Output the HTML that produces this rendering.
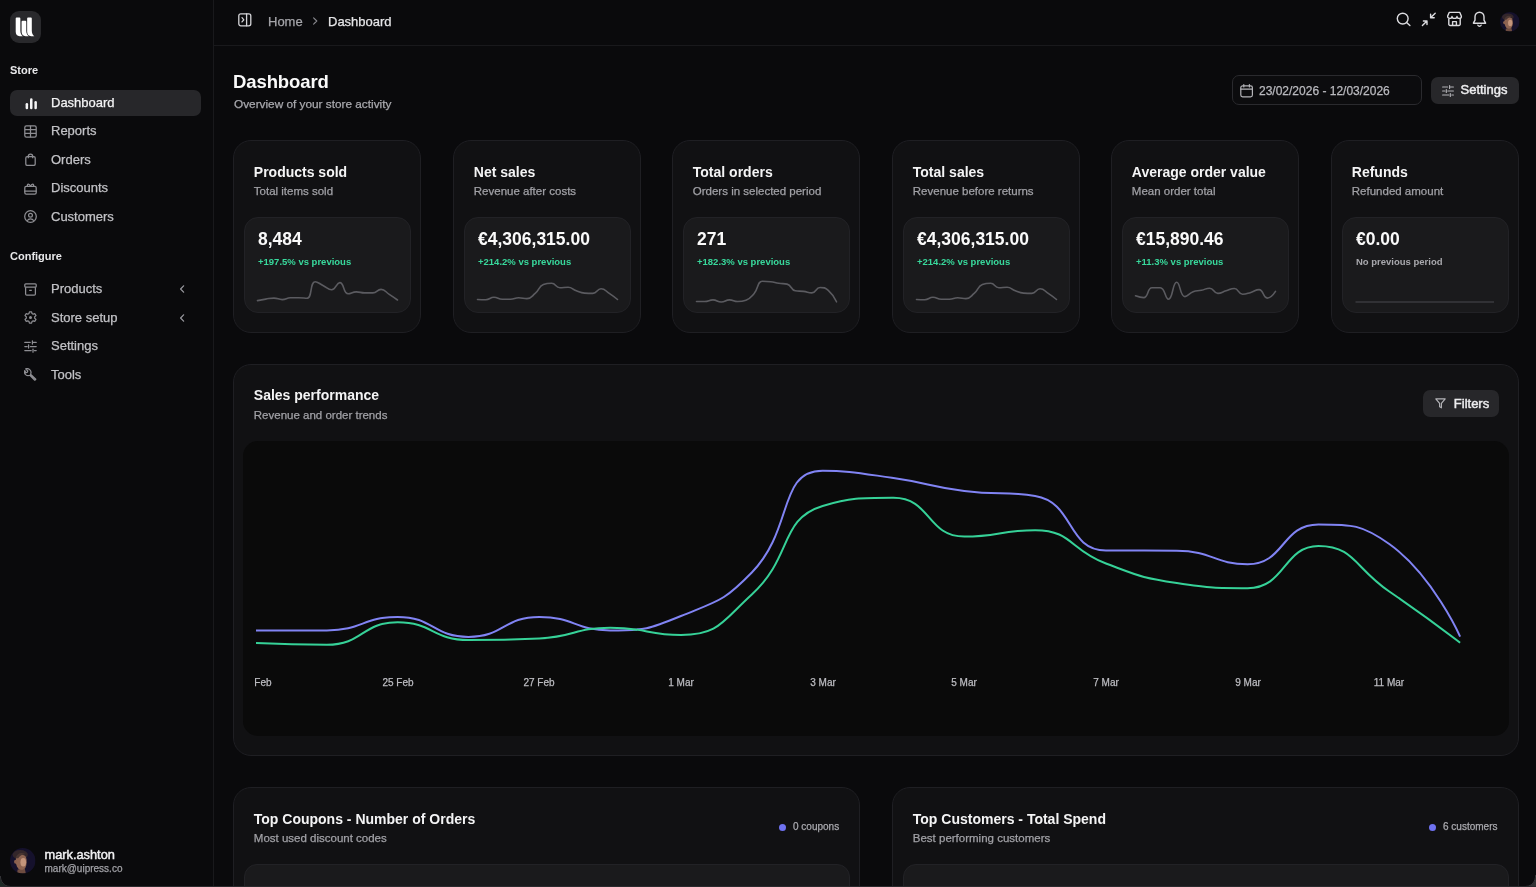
<!DOCTYPE html>
<html><head><meta charset="utf-8">
<style>
*{box-sizing:border-box;margin:0;padding:0}
html,body{width:1536px;height:887px;overflow:hidden;background:#0a0a0c;font-family:"Liberation Sans",sans-serif;color:#f4f4f5}
body>*{will-change:transform}
.item .tx,.crumb,.sub,.date .tx,.btn .tx,.st-s,.c-s,.xl,.badge,.rg{-webkit-text-stroke:0.25px currentColor}
.btn .tx,.med{-webkit-text-stroke:0.45px currentColor}
.abs{position:absolute}
#side{position:absolute;left:0;top:0;width:214px;height:887px;background:#0a0a0c;border-right:1px solid #19191c}
.logo{position:absolute;left:10.2px;top:11.4px;width:31px;height:31.5px;border-radius:9px;background:#29292c}
.sec{position:absolute;left:10px;font-size:11px;font-weight:bold;line-height:16px;color:#e8e8ea}
.item{position:absolute;left:10px;width:191px;height:26px;border-radius:7px}
.item.active{background:#27272a}
.item .ic{position:absolute;left:14px;top:6.5px;width:13px;height:13px}
.item .tx{position:absolute;left:41px;top:4px;font-size:13px;line-height:18px;color:#c2c2c6;white-space:nowrap}
.item.active .tx{color:#f4f4f5}
.item .chev{position:absolute;left:169px;top:9px}
#hdr{position:absolute;left:214px;top:0;width:1322px;height:46px;border-bottom:1px solid #19191c}
.crumb{position:absolute;top:12.9px;font-size:13px;line-height:18px;white-space:nowrap}
.hic{position:absolute;top:11px}
.ttl{position:absolute;left:233px;top:69.7px;font-size:18.5px;font-weight:bold;line-height:24px;color:#fafafa;letter-spacing:-0.1px}
.sub{position:absolute;left:233.5px;top:96.1px;font-size:11.8px;line-height:16px;color:#a9a9ae}
.date{position:absolute;left:1232px;top:75px;width:190px;height:30px;border:1px solid #2a2a2e;border-radius:7px;background:#0c0c0e}
.date .tx{position:absolute;left:26px;top:6.5px;font-size:12px;line-height:16px;color:#bababf;white-space:nowrap}
.btn{position:absolute;background:#27272a;border-radius:7px}
.btn .tx{position:absolute;font-size:13px;line-height:18px;color:#ededef;white-space:nowrap}
.stat{position:absolute;top:140px;width:188px;height:193px;border:1px solid #1f1f23;border-radius:18px;background:#111113}
.st-t{position:absolute;left:19.8px;top:20.5px;font-size:14px;font-weight:bold;line-height:20px;color:#f4f4f5;white-space:nowrap}
.st-s{position:absolute;left:19.8px;top:41.5px;font-size:11.5px;line-height:16px;color:#a1a1a6;white-space:nowrap}
.st-box{position:absolute;left:10px;top:76px;width:167px;height:96px;border:1px solid #222226;border-radius:14px;background:#1a1a1c}
.st-v{position:absolute;left:13px;top:8.5px;font-size:17.5px;font-weight:bold;line-height:24px;color:#fafafa;white-space:nowrap}
.chg{position:absolute;left:13px;top:37.4px;font-size:9.5px;font-weight:bold;line-height:14px;color:#38d99c;white-space:nowrap}
.chg.nop{color:#a8a8ad}
.spark{position:absolute;left:10.7px;top:51.9px}
.card{position:absolute;border:1px solid #1f1f23;border-radius:18px;background:#111113}
.c-t{position:absolute;left:19.8px;font-size:14px;font-weight:bold;line-height:20px;color:#f4f4f5;white-space:nowrap}
.c-s{position:absolute;left:19.8px;font-size:11.5px;line-height:16px;color:#a1a1a6;white-space:nowrap}
.chart{position:absolute;background:#0a0a0a;border-radius:15px;overflow:hidden}
.xl{position:absolute;top:677px;font-size:10px;line-height:12px;color:#bdbdc2;white-space:nowrap;transform:translateX(-50%)}
.badge{position:absolute;font-size:10px;line-height:14px;color:#a9a9ae;white-space:nowrap}
.badge i{position:absolute;left:-14px;top:4px;width:7px;height:7px;border-radius:50%;background:#6f72f0}
.inner{position:absolute;background:#1a1a1c;border:1px solid #222226;border-radius:13px}
</style></head>
<body>
<!-- SIDEBAR -->
<div id="side">
  <div class="logo">
    <svg width="31" height="31" viewBox="0 0 31 31" style="position:absolute;left:0;top:0">
      <g fill="#ffffff">
        <path d="M5.70,7.40Q5.70,6.50 6.60,6.50H9.45Q10.35,6.50 10.35,7.40V19.8C10.35,22.4 11.35,24.2 12.85,25.2H9.70C7.20,25.2 5.70,23.6 5.70,20.8Z"/><path d="M11.60,10.70Q11.60,9.80 12.50,9.80H15.35Q16.25,9.80 16.25,10.70V19.8C16.25,22.4 17.25,24.2 18.75,25.2H15.60C13.10,25.2 11.60,23.6 11.60,20.8Z"/><path d="M17.15,7.40Q17.15,6.50 18.05,6.50H20.90Q21.80,6.50 21.80,7.40V19.8C21.80,22.4 22.80,24.2 24.30,25.2H21.15C18.65,25.2 17.15,23.6 17.15,20.8Z"/>
      </g>
    </svg>
  </div>
  <div class="sec" style="top:61.6px">Store</div>
  <div class="item active" style="top:90px">
    <svg class="ic" viewBox="0 0 13 13" style="left:14.5px"><g fill="#f4f4f5"><rect x="0.6" y="6" width="2.5" height="6.3" rx="1.25"/><rect x="5" y="1.2" width="2.5" height="11.1" rx="1.25"/><rect x="9.4" y="4" width="2.5" height="8.3" rx="1.25"/></g></svg>
    <div class="tx">Dashboard</div>
  </div>
  <div class="item" style="top:118.4px">
    <svg class="ic" viewBox="0 0 13 13"><g fill="none" stroke="#8e8e93" stroke-width="1.25"><rect x="0.8" y="0.8" width="11.4" height="11.4" rx="1.6"/><path d="M0.8,4.6H12.2M0.8,8.4H12.2M6.5,0.8V12.2"/></g></svg>
    <div class="tx">Reports</div>
  </div>
  <div class="item" style="top:146.8px">
    <svg class="ic" viewBox="0 0 13 13"><g fill="none" stroke="#8e8e93" stroke-width="1.25" stroke-linejoin="round"><rect x="1.8" y="3.6" width="9.4" height="8.8" rx="1.4"/><path d="M4.3,5.2V3.2a2.2,2.2 0 0 1 4.4,0V5.2"/></g></svg>
    <div class="tx">Orders</div>
  </div>
  <div class="item" style="top:175.2px">
    <svg class="ic" viewBox="0 0 13 13"><g fill="none" stroke="#8e8e93" stroke-width="1.25" stroke-linejoin="round" stroke-linecap="round"><rect x="0.8" y="4.4" width="11.4" height="7.8" rx="1.4"/><path d="M0.8,9.2H12.2M6.5,4.4C5.4,1.4 3,1.2 3.4,4.4M6.5,4.4C7.6,1.4 10,1.2 9.6,4.4"/></g></svg>
    <div class="tx">Discounts</div>
  </div>
  <div class="item" style="top:203.6px">
    <svg class="ic" viewBox="0 0 13 13"><g fill="none" stroke="#8e8e93" stroke-width="1.25"><circle cx="6.5" cy="6.5" r="5.8"/><circle cx="6.5" cy="5.2" r="1.9"/><path d="M3.2,10.8c0.8-1.4 1.9-2 3.3-2s2.5,0.6 3.3,2"/></g></svg>
    <div class="tx">Customers</div>
  </div>

  <div class="sec" style="top:247.8px">Configure</div>
  <div class="item" style="top:276.4px">
    <svg class="ic" viewBox="0 0 13 13"><g fill="none" stroke="#8e8e93" stroke-width="1.25" stroke-linejoin="round"><rect x="0.8" y="0.8" width="11.4" height="3.4" rx="1"/><path d="M1.6,4.2V11a1.2,1.2 0 0 0 1.2,1.2h7.4a1.2,1.2 0 0 0 1.2-1.2V4.2M5.2,7.3h2.6"/></g></svg>
    <div class="tx">Products</div>
    <svg class="chev" width="7" height="8" viewBox="0 0 7 8"><path d="M4.6,0.8L1.6,4L4.6,7.2" fill="none" stroke="#9a9aa0" stroke-width="1.2" stroke-linecap="round" stroke-linejoin="round"/></svg>
  </div>
  <div class="item" style="top:304.8px">
    <svg class="ic" viewBox="0 0 13 13"><g fill="none" stroke="#8e8e93" stroke-width="1.2" stroke-linejoin="round"><path d="M5.4,0.8h2.2l0.4,1.7l1.2,0.7l1.7-0.5l1.1,1.9l-1.3,1.2v1.4l1.3,1.2l-1.1,1.9l-1.7-0.5l-1.2,0.7l-0.4,1.7H5.4L5,10.5L3.8,9.8L2.1,10.3L1,8.4l1.3-1.2V5.8L1,4.6l1.1-1.9l1.7,0.5L5,2.5Z"/></g><circle cx="6.5" cy="6.5" r="1.5" fill="#8e8e93"/></svg>
    <div class="tx">Store setup</div>
    <svg class="chev" width="7" height="8" viewBox="0 0 7 8"><path d="M4.6,0.8L1.6,4L4.6,7.2" fill="none" stroke="#9a9aa0" stroke-width="1.2" stroke-linecap="round" stroke-linejoin="round"/></svg>
  </div>
  <div class="item" style="top:333.2px">
    <svg class="ic" viewBox="0 0 13 13"><g fill="none" stroke="#8e8e93" stroke-width="1.25" stroke-linecap="round"><path d="M0.8,2.4H6.2M9.4,2.4H12.2M8.4,0.8V4M0.8,6.5H3.2M6.4,6.5H12.2M4.6,4.9V8.1M0.8,10.6H7.2M10.4,10.6H12.2M9,9V12.2"/></g></svg>
    <div class="tx">Settings</div>
  </div>
  <div class="item" style="top:361.6px">
    <svg class="ic" viewBox="0 0 13 13"><g fill="none" stroke="#8e8e93" stroke-width="1.25" stroke-linejoin="round"><path d="M11.8,11.2L6.6,6.2C7.3,4.6 7,2.8 5.7,1.6C4.6,0.6 3,0.3 1.7,0.9L3.8,3L3.2,4.3L1.8,4.7L0.8,2.6C0.2,4 0.6,5.6 1.6,6.6C2.7,7.6 4.4,7.9 5.8,7.3L10.8,12.2Z"/></g></svg>
    <div class="tx">Tools</div>
  </div>

  <div class="abs" style="left:10px;top:848px;width:25.5px;height:25.5px"><svg viewBox="0 0 100 100" width="100%" height="100%" style="position:absolute;left:0;top:0;display:block"><defs><clipPath id="av1"><circle cx="50" cy="50" r="50"/></clipPath></defs><g clip-path="url(#av1)"><rect width="100" height="100" fill="#15112c"/><ellipse cx="40" cy="26" rx="30" ry="18" fill="#33262a"/><path d="M30,84 L58,80 L62,100 L28,100Z" fill="#6e4c40"/><path d="M24,40 C30,24 52,22 62,34 C68,48 66,66 60,78 C54,86 40,88 32,80 C24,70 20,54 24,40Z" fill="#8e6452"/><ellipse cx="52" cy="56" rx="11" ry="17" fill="#c4957c"/><ellipse cx="22" cy="54" rx="6" ry="8" fill="#8a604f"/><path d="M22,40 C26,22 44,14 60,24 C52,26 40,28 32,40Z" fill="#4a3632"/></g></svg></div>
  <div class="abs med" style="left:44.5px;top:846px;font-size:12.8px;line-height:17px;color:#f0f0f2;white-space:nowrap">mark.ashton</div>
  <div class="abs rg" style="left:44.5px;top:862px;font-size:10px;line-height:14px;color:#a1a1a6;white-space:nowrap">mark@uipress.co</div>
</div>

<!-- HEADER -->
<div id="hdr"></div>
<svg class="abs" style="left:237.6px;top:12.6px" width="14" height="14" viewBox="0 0 14 14"><g fill="none" stroke="#d4d4d8" stroke-width="1.3" stroke-linecap="round" stroke-linejoin="round"><rect x="0.8" y="0.8" width="12" height="12" rx="2"/><path d="M8.6,0.8V12.8M4,4.7L5.8,6.8L4,8.9"/></g></svg>
<div class="crumb" style="left:268.3px;color:#a5a5aa">Home</div>
<svg class="abs" style="left:311.5px;top:17px" width="7" height="8" viewBox="0 0 7 8"><path d="M1.6,0.8L4.8,4L1.6,7.2" fill="none" stroke="#8a8a90" stroke-width="1.1" stroke-linecap="round" stroke-linejoin="round"/></svg>
<div class="crumb" style="left:327.8px;color:#e6e6e8">Dashboard</div>

<!-- header right icons -->
<svg class="abs" style="left:1396px;top:12px" width="16" height="15" viewBox="0 0 16 15"><g fill="none" stroke="#dcdce0" stroke-width="1.4" stroke-linecap="round"><circle cx="6.7" cy="6.6" r="5.4"/><path d="M10.6,10.5L13.9,13.6"/></g></svg>
<svg class="abs" style="left:1421px;top:12px" width="16" height="15" viewBox="0 0 16 15"><g fill="none" stroke="#dcdce0" stroke-width="1.4" stroke-linecap="round" stroke-linejoin="round"><path d="M14.2,1.2L9.6,5.8M9.6,2.2V5.8H13.2M1.4,13.6L6,9M2.4,9H6V12.6"/></g></svg>
<svg class="abs" style="left:1446.5px;top:11px" width="16" height="16" viewBox="0 0 16 16"><g fill="none" stroke="#dcdce0" stroke-width="1.4" stroke-linejoin="round"><path d="M2.2,1.4H12.8L14.4,5.2C14.4,6.6 13.4,7.4 12.3,7.4C11.1,7.4 10,6.6 10,5.4C10,6.6 9,7.4 7.5,7.4C6,7.4 5,6.6 5,5.4C5,6.6 3.9,7.4 2.7,7.4C1.6,7.4 0.6,6.6 0.6,5.2Z"/><path d="M1.8,7.4V13.2A1.3,1.3 0 0 0 3.1,14.5H11.9A1.3,1.3 0 0 0 13.2,13.2V7.4M5.6,14.5V10.6H9.4V14.5"/></g></svg>
<svg class="abs" style="left:1471.5px;top:11px" width="16" height="17" viewBox="0 0 16 17"><g fill="none" stroke="#dcdce0" stroke-width="1.4" stroke-linecap="round" stroke-linejoin="round"><path d="M7.5,1.2C4.9,1.2 3,3.2 3,5.8V9.2L1.4,12.2H13.6L12,9.2V5.8C12,3.2 10.1,1.2 7.5,1.2Z"/><path d="M5.9,14.2C6.3,15 6.8,15.3 7.5,15.3C8.2,15.3 8.7,15 9.1,14.2"/></g></svg>
<div class="abs" style="left:1499.8px;top:11.9px;width:19.6px;height:19.6px"><svg viewBox="0 0 100 100" width="100%" height="100%" style="position:absolute;left:0;top:0;display:block"><defs><clipPath id="av2"><circle cx="50" cy="50" r="50"/></clipPath></defs><g clip-path="url(#av2)"><rect width="100" height="100" fill="#15112c"/><ellipse cx="40" cy="26" rx="30" ry="18" fill="#33262a"/><path d="M30,84 L58,80 L62,100 L28,100Z" fill="#6e4c40"/><path d="M24,40 C30,24 52,22 62,34 C68,48 66,66 60,78 C54,86 40,88 32,80 C24,70 20,54 24,40Z" fill="#8e6452"/><ellipse cx="52" cy="56" rx="11" ry="17" fill="#c4957c"/><ellipse cx="22" cy="54" rx="6" ry="8" fill="#8a604f"/><path d="M22,40 C26,22 44,14 60,24 C52,26 40,28 32,40Z" fill="#4a3632"/></g></svg></div>

<!-- PAGE TITLE -->
<div class="ttl">Dashboard</div>
<div class="sub">Overview of your store activity</div>

<div class="date">
  <svg class="abs" style="left:6.5px;top:7.5px" width="14" height="14" viewBox="0 0 14 14"><g fill="none" stroke="#b4b4b8" stroke-width="1.2" stroke-linecap="round"><rect x="0.8" y="1.8" width="11.6" height="11" rx="1.8"/><path d="M0.8,5.2H12.4M3.8,0.6V3M9.4,0.6V3"/></g></svg>
  <div class="tx">23/02/2026 - 12/03/2026</div>
</div>
<div class="btn" style="left:1431.3px;top:76.5px;width:87.5px;height:26.5px">
  <svg class="abs" style="left:10.5px;top:7.5px" width="12" height="12" viewBox="0 0 12 12"><g fill="none" stroke="#b4b4b8" stroke-width="1.15" stroke-linecap="round"><path d="M0.6,2H5.6M8.6,2H11.4M7.6,0.6V3.4M0.6,6H2.8M5.8,6H11.4M4.3,4.6V7.4M0.6,10H6.8M9.8,10H11.4M8.3,8.6V11.4"/></g></svg>
  <div class="tx" style="left:29.5px;top:4.2px">Settings</div>
</div>

<!-- STAT CARDS -->

  <div class="stat" style="left:233px">
    <div class="st-t">Products sold</div>
    <div class="st-s">Total items sold</div>
    <div class="st-box">
      <div class="st-v">8,484</div>
      <div class="chg">+197.5% vs previous</div>
      <svg class="spark" width="145" height="40" viewBox="0 0 145 40"><path d="M1.50,30.60C1.50,30.60 5.60,29.73 9.74,29.10C13.83,28.48 13.87,28.10 17.97,28.10C22.11,28.10 22.10,29.60 26.21,29.60C30.34,29.60 30.28,27.90 34.44,27.80C38.51,27.70 38.56,27.70 42.68,27.70C46.80,27.70 48.37,28.30 50.91,28.30C56.61,28.30 53.64,11.70 59.15,11.70C61.87,11.70 63.26,13.70 67.38,15.70C71.50,17.70 71.85,19.70 75.62,19.70C80.09,19.70 80.23,12.60 83.85,12.60C88.46,12.60 86.97,23.70 92.09,23.70C95.21,23.70 96.17,21.90 100.32,21.90C104.41,21.90 104.43,22.90 108.56,22.90C112.66,22.90 112.85,22.90 116.79,22.90C121.08,22.90 121.06,19.40 125.03,19.40C129.30,19.40 129.22,21.79 133.26,24.40C137.45,27.09 141.50,30.00 141.50,30.00" fill="none" stroke="#5b5b60" stroke-width="1.6" stroke-linecap="round"/></svg>
    </div>
  </div>
  <div class="stat" style="left:453px">
    <div class="st-t">Net sales</div>
    <div class="st-s">Revenue after costs</div>
    <div class="st-box">
      <div class="st-v">€4,306,315.00</div>
      <div class="chg">+214.2% vs previous</div>
      <svg class="spark" width="145" height="40" viewBox="0 0 145 40"><path d="M1.50,29.50C1.50,29.50 5.70,29.70 9.74,29.70C13.94,29.70 13.82,27.30 17.97,27.30C22.06,27.30 22.03,29.20 26.21,29.20C30.27,29.20 30.35,29.20 34.44,29.20C38.59,29.20 38.54,27.80 42.68,27.80C46.77,27.80 47.13,28.60 50.91,28.60C55.36,28.60 55.47,26.53 59.15,23.40C63.70,19.53 62.51,16.48 67.38,14.60C70.75,13.30 71.73,13.30 75.62,13.30C79.97,13.30 79.48,17.70 83.85,17.70C87.72,17.70 88.15,17.20 92.09,17.20C96.38,17.20 96.10,19.29 100.32,20.80C104.34,22.24 104.37,22.79 108.56,23.10C112.60,23.40 112.96,23.40 116.79,23.40C121.19,23.40 120.91,18.75 125.03,18.75C129.15,18.75 129.31,20.82 133.26,23.40C137.55,26.20 141.50,29.50 141.50,29.50" fill="none" stroke="#5b5b60" stroke-width="1.6" stroke-linecap="round"/></svg>
    </div>
  </div>
  <div class="stat" style="left:672px">
    <div class="st-t">Total orders</div>
    <div class="st-s">Orders in selected period</div>
    <div class="st-box">
      <div class="st-v">271</div>
      <div class="chg">+182.3% vs previous</div>
      <svg class="spark" width="145" height="40" viewBox="0 0 145 40"><path d="M1.50,31.50C1.50,31.50 5.66,31.50 9.74,31.50C13.89,31.50 13.88,29.90 17.97,29.90C22.11,29.90 22.09,32.00 26.21,32.00C30.32,32.00 30.30,29.90 34.44,29.90C38.53,29.90 38.55,31.50 42.68,31.50C46.78,31.50 47.30,31.50 50.91,30.20C55.54,28.53 55.68,27.39 59.15,23.40C63.91,17.92 62.11,11.25 67.38,11.25C70.35,11.25 71.54,11.25 75.62,11.70C79.77,12.16 79.71,12.70 83.85,13.30C87.94,13.90 88.48,13.30 92.09,14.10C96.72,15.13 95.69,20.03 100.32,20.80C103.93,21.40 104.47,20.88 108.56,21.40C112.70,21.93 113.01,22.90 116.79,22.90C121.25,22.90 120.66,17.50 125.03,17.50C128.89,17.50 130.13,17.58 133.26,20.30C138.36,24.73 141.50,31.80 141.50,31.80" fill="none" stroke="#5b5b60" stroke-width="1.6" stroke-linecap="round"/></svg>
    </div>
  </div>
  <div class="stat" style="left:892px">
    <div class="st-t">Total sales</div>
    <div class="st-s">Revenue before returns</div>
    <div class="st-box">
      <div class="st-v">€4,306,315.00</div>
      <div class="chg">+214.2% vs previous</div>
      <svg class="spark" width="145" height="40" viewBox="0 0 145 40"><path d="M1.50,29.50C1.50,29.50 5.70,29.70 9.74,29.70C13.94,29.70 13.82,27.30 17.97,27.30C22.06,27.30 22.03,29.20 26.21,29.20C30.27,29.20 30.35,29.20 34.44,29.20C38.59,29.20 38.54,27.80 42.68,27.80C46.77,27.80 47.13,28.60 50.91,28.60C55.36,28.60 55.47,26.53 59.15,23.40C63.70,19.53 62.51,16.48 67.38,14.60C70.75,13.30 71.73,13.30 75.62,13.30C79.97,13.30 79.48,17.70 83.85,17.70C87.72,17.70 88.15,17.20 92.09,17.20C96.38,17.20 96.10,19.29 100.32,20.80C104.34,22.24 104.37,22.79 108.56,23.10C112.60,23.40 112.96,23.40 116.79,23.40C121.19,23.40 120.91,18.75 125.03,18.75C129.15,18.75 129.31,20.82 133.26,23.40C137.55,26.20 141.50,29.50 141.50,29.50" fill="none" stroke="#5b5b60" stroke-width="1.6" stroke-linecap="round"/></svg>
    </div>
  </div>
  <div class="stat" style="left:1111px">
    <div class="st-t">Average order value</div>
    <div class="st-s">Mean order total</div>
    <div class="st-box">
      <div class="st-v">€15,890.46</div>
      <div class="chg">+11.3% vs previous</div>
      <svg class="spark" width="145" height="40" viewBox="0 0 145 40"><path d="M1.50,25.80C1.50,25.80 6.48,27.60 9.74,27.60C14.71,27.60 12.95,17.70 17.97,17.70C21.18,17.70 23.18,17.70 26.21,17.70C31.41,17.70 30.91,29.20 34.44,29.20C39.14,29.20 38.29,12.30 42.68,12.30C46.53,12.30 45.70,26.60 50.91,26.60C53.94,26.60 54.75,23.31 59.15,21.70C62.98,20.30 63.30,21.17 67.38,20.30C71.54,19.42 71.78,18.20 75.62,18.20C80.02,18.20 79.49,23.40 83.85,23.40C87.72,23.40 87.95,22.03 92.09,20.80C96.19,19.58 96.53,18.50 100.32,18.50C104.77,18.50 104.09,24.20 108.56,24.20C112.32,24.20 112.74,23.53 116.79,22.40C120.98,21.23 121.54,19.60 125.03,19.60C129.78,19.60 128.92,28.10 133.26,28.10C137.16,28.10 141.50,21.40 141.50,21.40" fill="none" stroke="#5b5b60" stroke-width="1.6" stroke-linecap="round"/></svg>
    </div>
  </div>
  <div class="stat" style="left:1331px">
    <div class="st-t">Refunds</div>
    <div class="st-s">Refunded amount</div>
    <div class="st-box">
      <div class="st-v">€0.00</div>
      <div class="chg nop">No previous period</div>
      <svg class="spark" width="145" height="40" viewBox="0 0 145 40"><path d="M1.5,32 L140,32" fill="none" stroke="#3a3a3e" stroke-width="1.6"/></svg>
    </div>
  </div>

<!-- SALES PERFORMANCE -->
<div class="card" style="left:233px;top:364px;width:1286px;height:392px">
  <div class="c-t" style="top:20.3px">Sales performance</div>
  <div class="c-s" style="top:41.8px">Revenue and order trends</div>
</div>
<div class="btn" style="left:1422.9px;top:389.5px;width:76.1px;height:27px">
  <svg class="abs" style="left:11.5px;top:8px" width="11" height="11" viewBox="0 0 11 11"><path d="M0.8,0.9H10.2L6.4,5.4V9.8L4.6,8.8V5.4Z" fill="none" stroke="#b4b4b8" stroke-width="1.15" stroke-linejoin="round"/></svg>
  <div class="tx" style="left:30.8px;top:4.5px">Filters</div>
</div>
<div class="chart" style="left:243px;top:441px;width:1266px;height:295px"></div>
<svg class="abs" style="left:0;top:0;overflow:visible" width="1536" height="887">
  <defs><clipPath id="cp"><rect x="256" y="441" width="1253" height="295"/></clipPath></defs>
  <path d="M256.00,630.40C256.00,630.40 291.73,630.40 326.83,630.40C362.56,630.40 362.61,616.90 397.66,616.90C433.44,616.90 433.07,636.90 468.49,636.90C503.90,636.90 503.54,616.90 539.32,616.90C574.37,616.90 574.78,630.40 610.15,630.40C645.61,630.40 648.04,629.47 680.98,616.00C718.87,600.52 723.39,601.65 751.81,572.50C794.22,529.00 777.64,470.70 822.64,470.70C848.47,470.70 858.25,472.95 893.47,478.00C929.08,483.10 928.64,486.47 964.30,491.00C999.47,495.47 1003.77,491.00 1035.13,496.00C1074.60,502.29 1066.45,550.25 1105.96,550.50C1137.28,550.70 1141.69,550.50 1176.79,550.70C1212.52,550.90 1214.32,564.20 1247.62,564.20C1285.15,564.20 1281.26,524.40 1318.45,524.40C1352.09,524.40 1361.89,524.40 1389.28,544.00C1432.72,575.09 1460.11,636.60 1460.11,636.60" fill="none" stroke="#8184f4" stroke-width="2" stroke-linejoin="round" stroke-linecap="butt"/>
  <path d="M256.00,643.10C256.00,643.10 292.27,644.80 326.83,644.80C363.10,644.80 361.93,622.20 397.66,622.20C432.76,622.20 432.54,640.00 468.49,640.00C503.37,640.00 504.10,640.00 539.32,638.50C574.93,636.98 574.63,627.70 610.15,627.70C645.46,627.70 647.97,635.00 680.98,635.00C718.80,635.00 722.17,621.50 751.81,594.50C793.00,557.00 779.16,519.04 822.64,506.00C849.99,497.80 860.26,497.80 893.47,497.80C931.09,497.80 926.64,536.60 964.30,536.60C997.47,536.60 1001.41,530.20 1035.13,530.20C1072.24,530.20 1069.42,549.88 1105.96,563.50C1140.25,576.28 1140.78,577.62 1176.79,583.00C1211.61,588.20 1214.84,588.20 1247.62,588.20C1285.67,588.20 1283.40,546.00 1318.45,546.00C1354.23,546.00 1354.53,567.78 1389.28,591.50C1425.36,616.13 1460.11,642.70 1460.11,642.70" fill="none" stroke="#36d298" stroke-width="2" stroke-linejoin="round" stroke-linecap="butt"/>
</svg>
<div class="abs" style="left:255px;top:660px;width:1253px;height:40px;overflow:hidden">
  <div class="xl" style="left:1px;top:17px">23 Feb</div>
</div>
<div class="xl" style="left:397.7px">25 Feb</div>
<div class="xl" style="left:539.3px">27 Feb</div>
<div class="xl" style="left:681px">1 Mar</div>
<div class="xl" style="left:822.6px">3 Mar</div>
<div class="xl" style="left:964.3px">5 Mar</div>
<div class="xl" style="left:1105.9px">7 Mar</div>
<div class="xl" style="left:1247.6px">9 Mar</div>
<div class="xl" style="left:1389.3px">11 Mar</div>

<!-- BOTTOM CARDS -->
<div class="card" style="left:233px;top:787px;width:627px;height:200px">
  <div class="c-t" style="top:21.3px">Top Coupons - Number of Orders</div>
  <div class="c-s" style="top:41.8px">Most used discount codes</div>
  <div class="badge" style="left:559px;top:32.3px"><i></i>0 coupons</div>
  <div class="inner" style="left:10px;top:76px;width:606px;height:120px"></div>
</div>
<div class="card" style="left:892px;top:787px;width:627px;height:200px">
  <div class="c-t" style="top:21.3px">Top Customers - Total Spend</div>
  <div class="c-s" style="top:41.8px">Best performing customers</div>
  <div class="badge" style="left:550px;top:32.3px"><i></i>6 customers</div>
  <div class="inner" style="left:10px;top:76px;width:606px;height:120px"></div>
</div>

<svg class="abs" style="left:0;top:876px" width="12" height="11" viewBox="0 0 12 11"><path d="M0,0 C0,5.5 3.5,10.5 10,10.5 L12,10.5 L12,11 L0,11Z" fill="#1d2a26"/><path d="M0.4,0 C0.4,5.5 3.8,10.4 10,10.4" fill="none" stroke="#3a3a3d" stroke-width="0.9"/></svg>
<svg class="abs" style="left:1524px;top:875px" width="12" height="12" viewBox="0 0 12 12"><path d="M12,0 C12,6 8.5,11.5 2,11.5 L0,11.5 L0,12 L12,12Z" fill="#333335"/><path d="M11.6,0 C11.6,6 8.2,11.4 2,11.4" fill="none" stroke="#3a3a3d" stroke-width="0.9"/></svg>
<div class="abs" style="left:0;top:886px;width:1536px;height:1px;background:#2a2a2d"></div>
</body></html>
